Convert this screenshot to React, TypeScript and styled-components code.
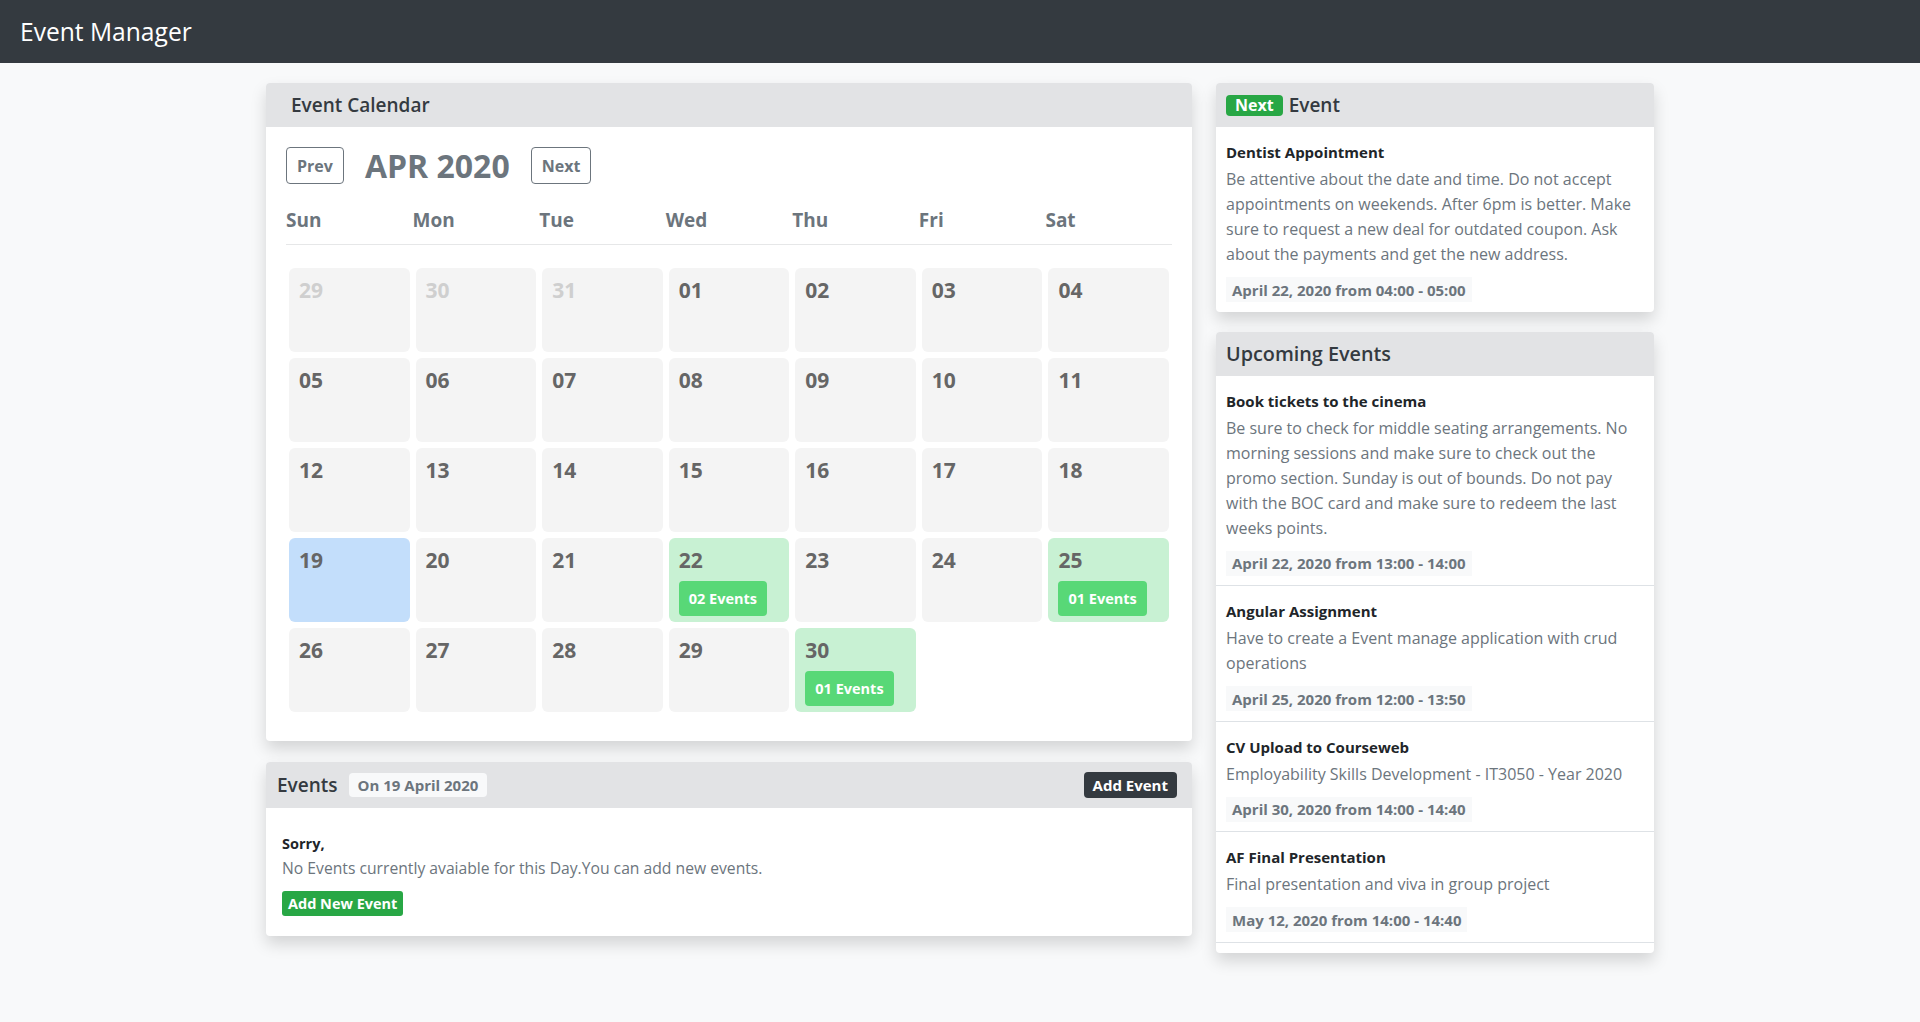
import React from "react";
import styled, { createGlobalStyle } from "styled-components";

const GlobalStyle = createGlobalStyle`
  * { box-sizing: border-box; }
  html, body { margin: 0; padding: 0; }
  body {
    background: #f8f9fa;
    font-family: "Open Sans", "Noto Sans", "Liberation Sans", sans-serif;
    color: #212529;
  }
`;

const NavBar = styled.header`
  height: 63px;
  background: #343a40;
  display: flex;
  align-items: center;
  padding-left: 20px;
`;

const Brand = styled.div`
  color: #fff;
  font-size: 24.6px;
  font-weight: 500;
`;

const Main = styled.main`
  display: flex;
  justify-content: center;
  align-items: flex-start;
  gap: 24px;
  padding-top: 20px;
  padding-bottom: 40px;
`;

const Column = styled.div<{ $width: number; $gap?: number }>`
  width: ${(p) => p.$width}px;
  display: flex;
  flex-direction: column;
  gap: ${(p) => p.$gap ?? 21}px;
`;

const Card = styled.section`
  background: #fff;
  border-radius: 4px;
  box-shadow: 0 8px 16px rgba(0, 0, 0, 0.15);
  overflow: hidden;
`;

const CardHeader = styled.div<{ $pl?: number; $pr?: number; $h?: number }>`
  height: ${(p) => p.$h ?? 44}px;
  background: #e2e3e5;
  display: flex;
  align-items: center;
  padding-left: ${(p) => p.$pl ?? 25}px;
  padding-right: ${(p) => p.$pr ?? 25}px;
`;

const HeaderTitle = styled.h2<{ $size?: number }>`
  margin: 0;
  font-size: ${(p) => p.$size ?? 19}px;
  font-weight: 600;
  color: #343a40;
`;

const CalendarBody = styled.div`
  padding: 20px 20px 26px;
`;

const MonthNav = styled.div`
  display: flex;
  align-items: center;
  gap: 21px;
  height: 37px;
`;

const OutlineButton = styled.button`
  height: 37px;
  padding: 0 10px;
  background: #fff;
  border: 1px solid #6c757d;
  border-radius: 4px;
  color: #6c757d;
  font-family: inherit;
  font-size: 16px;
  font-weight: 700;
`;

const MonthTitle = styled.h1`
  margin: 0;
  font-size: 32px;
  font-weight: 700;
  color: #6c757d;
`;

const WeekRow = styled.div`
  display: grid;
  grid-template-columns: repeat(7, 1fr);
  margin-top: 24px;
  padding-bottom: 12px;
  border-bottom: 1px solid #e6e7e8;
`;

const WeekDay = styled.div`
  font-size: 19px;
  font-weight: 700;
  color: #6c757d;
  line-height: 24px;
`;

const DayGrid = styled.div`
  display: grid;
  grid-template-columns: repeat(7, 1fr);
  gap: 6px;
  padding: 3px;
  margin-top: 20px;
`;

type DayKind = "past" | "normal" | "today" | "event" | "empty";

const DayCell = styled.div<{ $kind: DayKind }>`
  height: 84px;
  border-radius: 6px;
  padding: 9px 10px;
  background: ${(p) =>
    p.$kind === "today"
      ? "#c3defb"
      : p.$kind === "event"
      ? "#c8f1d3"
      : p.$kind === "empty"
      ? "transparent"
      : "#f4f4f4"};
`;

const DayNumber = styled.div<{ $muted?: boolean }>`
  font-size: 21px;
  font-weight: 700;
  line-height: 26px;
  color: ${(p) => (p.$muted ? "#cfcfcf" : "#666666")};
`;

const EventCount = styled.span`
  display: inline-flex;
  align-items: center;
  height: 35px;
  margin-top: 8px;
  padding: 0 10px;
  border-radius: 4px;
  background: #58d877;
  color: #fff;
  font-size: 14.5px;
  font-weight: 700;
`;

const HeaderBadge = styled.span`
  display: inline-flex;
  align-items: center;
  height: 24px;
  margin-left: 11px;
  padding: 0 9px;
  border-radius: 4px;
  background: #f8f9fa;
  color: #6c757d;
  font-size: 15px;
  font-weight: 700;
`;

const DarkButton = styled.button`
  margin-left: auto;
  height: 26px;
  padding: 0 9px;
  border: none;
  border-radius: 4px;
  background: #343a40;
  color: #fff;
  font-family: inherit;
  font-size: 15px;
  font-weight: 700;
`;

const EventsBody = styled.div`
  padding: 24px 16px 20px;
`;

const Strong = styled.div`
  font-size: 14.5px;
  font-weight: 700;
  line-height: 24px;
  color: #212529;
`;

const Muted = styled.div`
  font-size: 15.7px;
  line-height: 24px;
  color: #6c757d;
`;

const GreenButton = styled.button`
  margin-top: 11px;
  height: 25px;
  padding: 0 6px;
  border: none;
  border-radius: 3px;
  background: #28a745;
  color: #fff;
  font-family: inherit;
  font-size: 14.5px;
  font-weight: 700;
`;

const NextTag = styled.span`
  display: inline-flex;
  align-items: center;
  height: 21px;
  padding: 0 9px;
  margin-right: 6px;
  border-radius: 4px;
  background: #28a745;
  color: #fff;
  font-size: 16px;
  font-weight: 700;
`;

const EventItem = styled.div<{ $divider?: boolean }>`
  padding: 13px 10px 9.5px;
  border-bottom: ${(p) => (p.$divider ? "1px solid #dee2e6" : "none")};
`;

const ItemTitle = styled.div`
  font-size: 15px;
  font-weight: 700;
  line-height: 24px;
  margin-bottom: 3px;
  color: #212529;
`;

const ItemText = styled.div`
  font-size: 16px;
  line-height: 25px;
  color: #6c757d;
`;

const DateTag = styled.span`
  display: inline-flex;
  align-items: center;
  height: 25px;
  margin-top: 10px;
  padding: 0 6px;
  background: #f8f9fa;
  color: #6c757d;
  font-size: 15px;
  font-weight: 700;
`;

const ListFooter = styled.div`
  height: 10px;
`;

type Day = { n: string; kind: DayKind; events?: string };

const days: Day[] = [
  { n: "29", kind: "past" },
  { n: "30", kind: "past" },
  { n: "31", kind: "past" },
  ...["01", "02", "03", "04", "05", "06", "07", "08", "09", "10", "11", "12", "13", "14", "15", "16", "17", "18"].map(
    (n) => ({ n, kind: "normal" as DayKind })
  ),
  { n: "19", kind: "today" },
  { n: "20", kind: "normal" },
  { n: "21", kind: "normal" },
  { n: "22", kind: "event", events: "02 Events" },
  { n: "23", kind: "normal" },
  { n: "24", kind: "normal" },
  { n: "25", kind: "event", events: "01 Events" },
  { n: "26", kind: "normal" },
  { n: "27", kind: "normal" },
  { n: "28", kind: "normal" },
  { n: "29", kind: "normal" },
  { n: "30", kind: "event", events: "01 Events" },
  { n: "", kind: "empty" },
  { n: "", kind: "empty" },
];

const weekDays = ["Sun", "Mon", "Tue", "Wed", "Thu", "Fri", "Sat"];

const upcoming = [
  {
    title: "Book tickets to the cinema",
    text: "Be sure to check for middle seating arrangements. No morning sessions and make sure to check out the promo section. Sunday is out of bounds. Do not pay with the BOC card and make sure to redeem the last weeks points.",
    date: "April 22, 2020 from 13:00 - 14:00",
  },
  {
    title: "Angular Assignment",
    text: "Have to create a Event manage application with crud operations",
    date: "April 25, 2020 from 12:00 - 13:50",
  },
  {
    title: "CV Upload to Courseweb",
    text: "Employability Skills Development - IT3050 - Year 2020",
    date: "April 30, 2020 from 14:00 - 14:40",
  },
  {
    title: "AF Final Presentation",
    text: "Final presentation and viva in group project",
    date: "May 12, 2020 from 14:00 - 14:40",
  },
];

export default function App() {
  return (
    <>
      <GlobalStyle />
      <NavBar>
        <Brand>Event Manager</Brand>
      </NavBar>
      <Main>
        <Column $width={926}>
          <Card>
            <CardHeader>
              <HeaderTitle>Event Calendar</HeaderTitle>
            </CardHeader>
            <CalendarBody>
              <MonthNav>
                <OutlineButton>Prev</OutlineButton>
                <MonthTitle>APR 2020</MonthTitle>
                <OutlineButton>Next</OutlineButton>
              </MonthNav>
              <WeekRow>
                {weekDays.map((d) => (
                  <WeekDay key={d}>{d}</WeekDay>
                ))}
              </WeekRow>
              <DayGrid>
                {days.map((d, i) => (
                  <DayCell key={i} $kind={d.kind}>
                    {d.n && <DayNumber $muted={d.kind === "past"}>{d.n}</DayNumber>}
                    {d.events && <EventCount>{d.events}</EventCount>}
                  </DayCell>
                ))}
              </DayGrid>
            </CalendarBody>
          </Card>
          <Card>
            <CardHeader $pl={11} $pr={15} $h={46}>
              <HeaderTitle>Events</HeaderTitle>
              <HeaderBadge>On 19 April 2020</HeaderBadge>
              <DarkButton>Add Event</DarkButton>
            </CardHeader>
            <EventsBody>
              <Strong>Sorry,</Strong>
              <Muted>No Events currently avaiable for this Day.You can add new events.</Muted>
              <GreenButton>Add New Event</GreenButton>
            </EventsBody>
          </Card>
        </Column>
        <Column $width={438} $gap={20}>
          <Card>
            <CardHeader $pl={10} $h={44}>
              <NextTag>Next</NextTag>
              <HeaderTitle>Event</HeaderTitle>
            </CardHeader>
            <EventItem>
              <ItemTitle>Dentist Appointment</ItemTitle>
              <ItemText>
                Be attentive about the date and time. Do not accept appointments on weekends. After 6pm is
                better. Make sure to request a new deal for outdated coupon. Ask about the payments and get the
                new address.
              </ItemText>
              <DateTag>April 22, 2020 from 04:00 - 05:00</DateTag>
            </EventItem>
          </Card>
          <Card>
            <CardHeader $pl={10} $h={44}>
              <HeaderTitle $size={19.8}>Upcoming Events</HeaderTitle>
            </CardHeader>
            {upcoming.map((e) => (
              <EventItem key={e.title} $divider>
                <ItemTitle>{e.title}</ItemTitle>
                <ItemText>{e.text}</ItemText>
                <DateTag>{e.date}</DateTag>
              </EventItem>
            ))}
            <ListFooter />
          </Card>
        </Column>
      </Main>
    </>
  );
}
